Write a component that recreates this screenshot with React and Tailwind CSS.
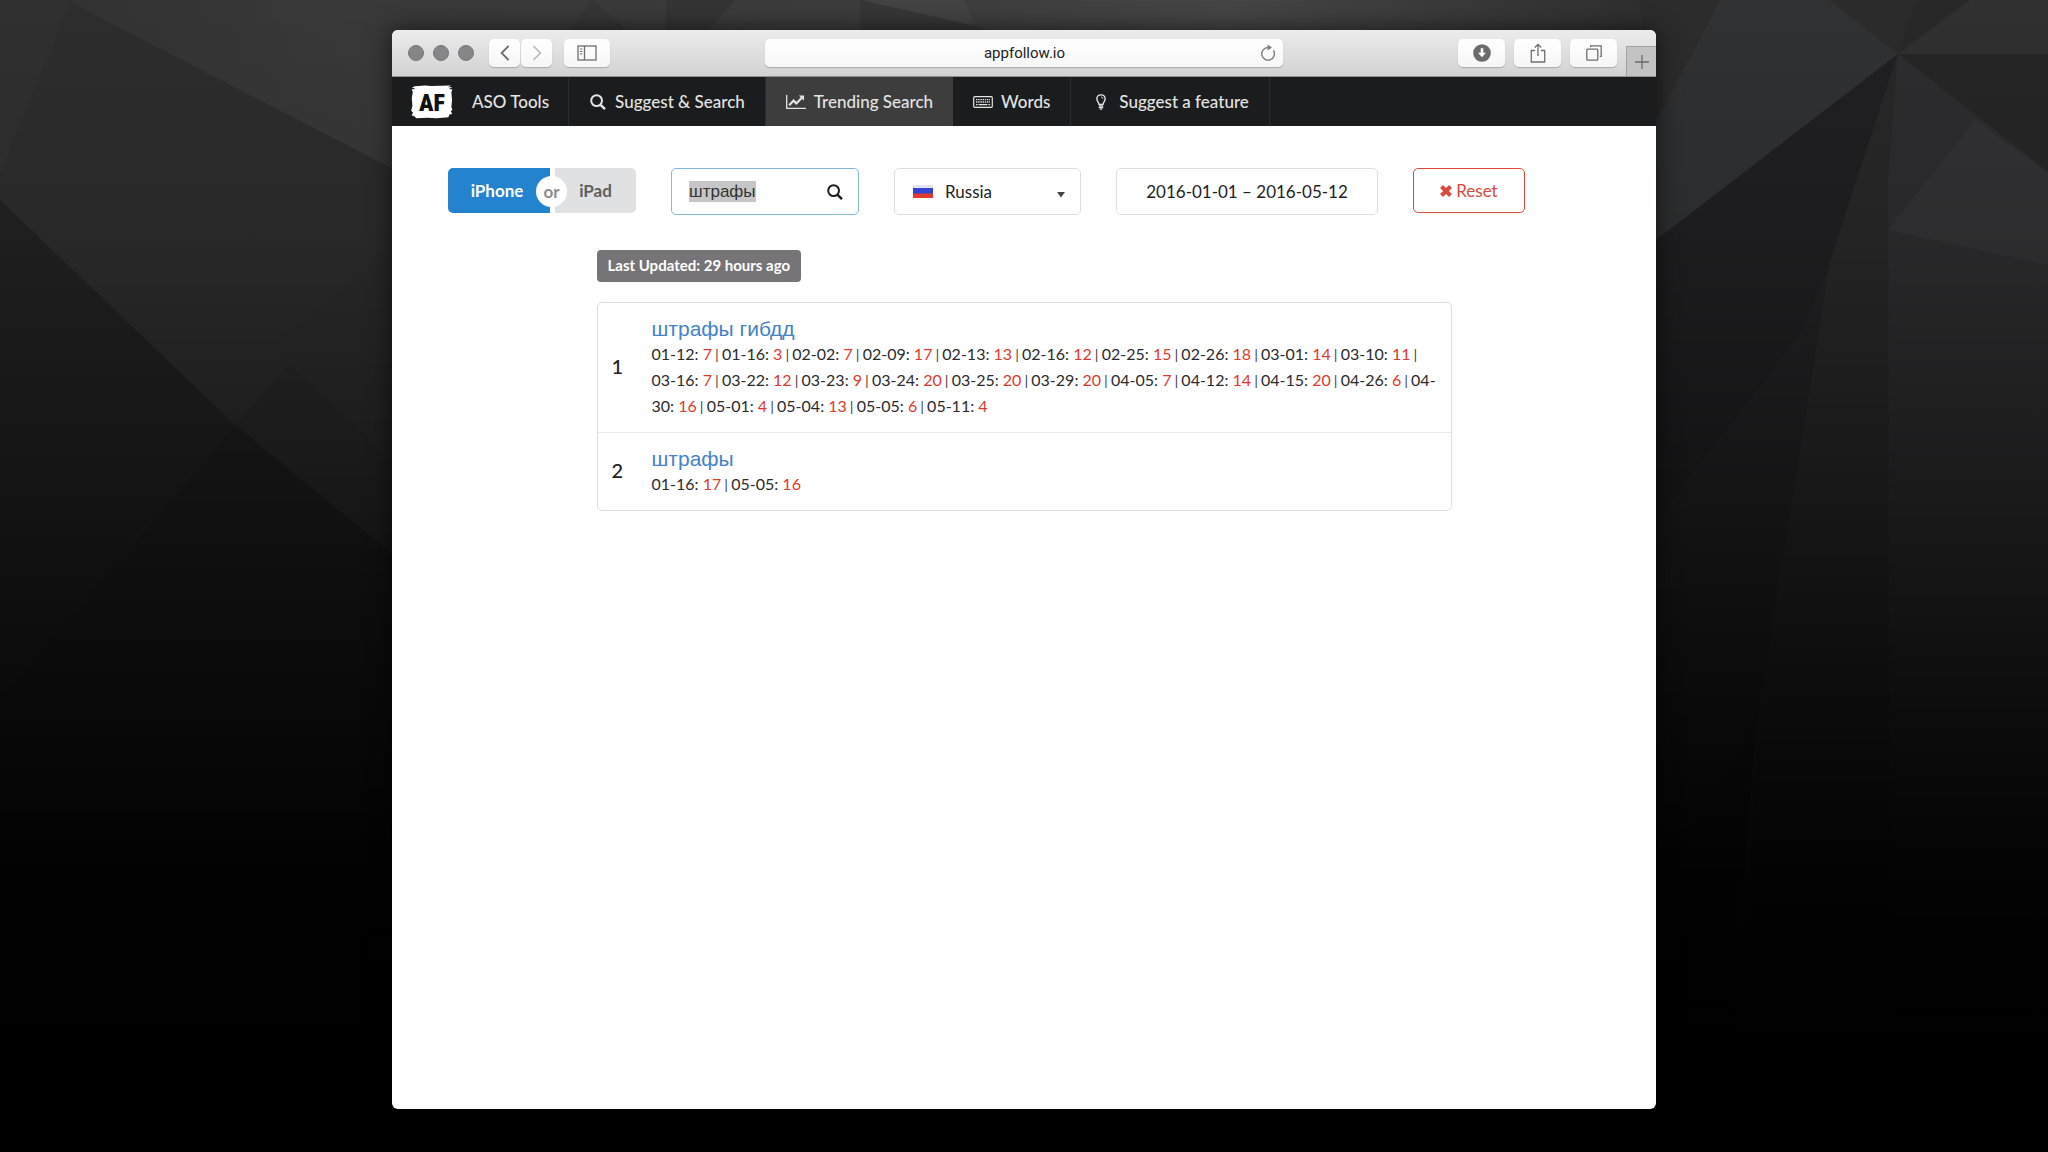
import React from 'react';

const navItems = [
  { label: 'Suggest & Search', icon: 'search', box: 'px-5 border-r' },
  { label: 'Trending Search', icon: 'chart', box: 'px-5 bg-[#3d3d3e]' },
  { label: 'Words', icon: 'keyboard', box: 'px-5 border-r' },
  { label: 'Suggest a feature', icon: 'bulb', box: 'px-5 border-r' },
];

const results = [
  {
    term: 'штрафы гибдд',
    positions: [
      ['01-12', 7], ['01-16', 3], ['02-02', 7], ['02-09', 17], ['02-13', 13], ['02-16', 12],
      ['02-25', 15], ['02-26', 18], ['03-01', 14], ['03-10', 11], ['03-16', 7], ['03-22', 12],
      ['03-23', 9], ['03-24', 20], ['03-25', 20], ['03-29', 20], ['04-05', 7], ['04-12', 14],
      ['04-15', 20], ['04-26', 6], ['04-30', 16], ['05-01', 4], ['05-04', 13], ['05-05', 6],
      ['05-11', 4],
    ],
  },
  { term: 'штрафы', positions: [['01-16', 17], ['05-05', 16]] },
];

const toolButton =
  'flex h-7 items-center justify-center rounded-[5px] bg-gradient-to-b from-white to-[#f6f6f6] shadow-[0_1px_1px_rgba(0,0,0,0.22)] text-[#6e6e6e]';

/* Faceted dark desktop wallpaper */
const Wallpaper = () => (
  <svg
    className="absolute inset-0 h-full w-full"
    viewBox="0 0 2048 1152"
    preserveAspectRatio="none"
    aria-hidden="true"
  >
    <defs>
      <linearGradient id="fade" x1="0" y1="0" x2="0" y2="1">
        <stop offset="0" stopColor="#000" stopOpacity="0" />
        <stop offset="0.2" stopColor="#000" stopOpacity="0.1" />
        <stop offset="0.4" stopColor="#000" stopOpacity="0.38" />
        <stop offset="0.6" stopColor="#000" stopOpacity="0.7" />
        <stop offset="0.75" stopColor="#000" stopOpacity="0.92" />
        <stop offset="0.9" stopColor="#000" stopOpacity="1" />
      </linearGradient>
      <linearGradient id="base" x1="0" y1="0" x2="1" y2="0">
        <stop offset="0" stopColor="#303030" />
        <stop offset="0.15" stopColor="#383838" />
        <stop offset="0.45" stopColor="#3c3c3c" />
        <stop offset="0.6" stopColor="#454545" />
        <stop offset="0.8" stopColor="#2f2f2f" />
        <stop offset="1" stopColor="#303030" />
      </linearGradient>
    </defs>
    <rect width="2048" height="1152" fill="url(#base)" />
    <polygon points="0,0 70,0 0,175" fill="#303030" />
    <polygon points="70,2 395,170 395,245 235,425 0,205 0,175" fill="#2d2d2e" />
    <polygon points="0,200 235,425 50,640 0,700" fill="#222222" />
    <polygon points="395,245 235,425 400,560" fill="#292929" />
    <polygon points="270,345 395,245 395,465" fill="#2c2c2c" />
    <polygon points="235,425 400,560 400,1152 0,1152 0,700 50,640" fill="#1f1f1f" />
    <polygon points="592,0 565,40 640,40" fill="#353535" />
    <polygon points="666,0 735,0 700,40 666,40" fill="#343434" />
    <polygon points="860,0 965,0 975,26" fill="#434343" />
    <polygon points="860,0 975,26 1020,40 860,40" fill="#363636" />
    <polygon points="1640,0 1720,0 1656,122" fill="#2c2c2d" />
    <polygon points="1720,0 1830,0 1898,54 1656,240 1656,122" fill="#303132" />
    <polygon points="1830,0 1898,54 1916,0" fill="#2b2b2b" />
    <polygon points="1916,0 1970,0 1898,54" fill="#282828" />
    <polygon points="1970,0 2048,0 2048,54 1898,54" fill="#303030" />
    <polygon points="1898,54 2048,54 2048,172" fill="#262627" />
    <polygon points="1898,54 1656,240 1656,1152 1720,1152 1757,720 1830,262" fill="#202022" />
    <polygon points="1800,335 1656,520 1656,900 1757,720 1830,262" fill="#232325" />
    <polygon points="1898,54 1830,262 1757,720 1740,1152 1890,1152" fill="#282829" />
    <polygon points="1898,54 2048,172 2048,1152 1890,1152 1888,180" fill="#2d2d2f" />
    <polygon points="1975,120 2048,172 2048,265 1888,230" fill="#323234" />
    <rect width="2048" height="1152" fill="url(#fade)" />
  </svg>
);

const NavIcon = ({ name }) => {
  if (name === 'search') {
    return (
      <svg viewBox="0 0 16 16" className="mx-px h-4 w-4" fill="none" stroke="currentColor" strokeWidth="2">
        <circle cx="6.6" cy="6.6" r="5.4" />
        <path d="M10.6 10.8l4.4 4.4" strokeWidth="2.4" />
      </svg>
    );
  }
  if (name === 'chart') {
    return (
      <svg viewBox="0 0 20 16" className="h-4 w-5" fill="none" stroke="currentColor">
        <path d="M.7 1v13.4H20" strokeWidth="1.3" />
        <path d="M3.2 11.2l4.4-4.6 2.8 2.8 5.4-5.6" strokeWidth="2.2" />
        <path d="M12.8 1.6h5.2v5.2z" fill="currentColor" stroke="none" />
      </svg>
    );
  }
  if (name === 'keyboard') {
    return (
      <svg viewBox="0 0 20 12" className="h-3 w-5" fill="none" stroke="currentColor">
        <rect x=".7" y=".7" width="18.6" height="10.6" rx="1" strokeWidth="1.2" />
        <path d="M3 3.6h14M3 6h14" strokeWidth="1.4" strokeDasharray="1.4 .8" />
        <path d="M3 8.6h1.6M5.6 8.6h8.8M15.4 8.6h1.6" strokeWidth="1.4" />
      </svg>
    );
  }
  return (
    <svg viewBox="0 0 10 16" className="mx-[5px] h-4 w-[10px]" fill="none" stroke="currentColor">
      <path d="M3 10.4C3 8.4.9 7.6.9 4.9.9 2.500 2.700.9 5 .9s4.100 1.600 4.100 4c0 2.700-2.100 3.500-2.100 5.500z" strokeWidth="1.4" />
      <path d="M5 3.100c1.200 0 1.900.7 1.900 1.700" strokeWidth=".9" />
      <path d="M2.800 12h4.400M2.800 13.600h4.400" strokeWidth="1.4" />
      <path d="M3.800 15.100h2.400" strokeWidth="1.2" />
    </svg>
  );
};

/* Brushed plate with the two-letter mark */
const Logo = () => (
  <svg viewBox="0 0 42 34" className="h-[34px] w-[42px]" role="img" aria-label="AF">
    <path
      d="M4 1.200L14 .5 20 .9 40 .4 37 2.200l4.400-.2L38 4l3.400.6-1 2.400.6 8-.6 7 1 3-1.600 1 1.400 3-2.800.6-1 2.600-12 1-9-.4-11 .4L3 31 .600 30.400 2 27.600.2 25.800 1.400 21 .8 13l1-6L.6 4.600l3.800-.8L.8 2.600z"
      fill="#fff"
    />
    <text
      x="21"
      y="26"
      textAnchor="middle"
      fontFamily="'Roboto Condensed', Roboto, sans-serif"
      fontWeight="900"
      fontSize="24"
      fill="#111"
    >
      AF
    </text>
  </svg>
);

const TitleBar = () => (
  <header className="flex h-[47px] items-center border-b border-[#8f8f8f] bg-gradient-to-b from-[#ececec] to-[#d2d2d2]">
    <div className="flex flex-1 items-center">
      <div className="ml-4 flex gap-[9px]">
        {['Close', 'Minimize', 'Zoom'].map((name) => (
          <button
            key={name}
            aria-label={name}
            className="h-4 w-4 rounded-full border border-[#767678] bg-[#868588]"
          />
        ))}
      </div>
      <div className="ml-[15px] flex gap-px">
        <button aria-label="Back" className={`${toolButton} w-[31px]`}>
          <svg viewBox="0 0 10 16" className="h-4 w-[10px]" fill="none" stroke="currentColor" strokeWidth="1.8">
            <path d="M8.600 1L1.600 8l7 7" />
          </svg>
        </button>
        <button aria-label="Forward" className={`${toolButton} w-[31px]`}>
          <svg viewBox="0 0 10 16" className="h-4 w-[10px]" fill="none" stroke="#b4b4b4" strokeWidth="1.5">
            <path d="M1.400 1l7 7-7 7" />
          </svg>
        </button>
      </div>
      <button aria-label="Show sidebar" className={`${toolButton} ml-3 w-[46px]`}>
        <svg viewBox="0 0 20 16" className="h-4 w-5" fill="none" stroke="currentColor" strokeWidth="1.3">
          <rect x="1" y="1" width="18" height="14" />
          <path d="M7.500 1v14" />
          <path d="M3 4h2.400M3 6.500h2.400M3 9h2.400" strokeWidth="1" />
        </svg>
      </button>
    </div>

    <div className="flex h-7 w-[41%] items-center rounded-[5px] bg-gradient-to-b from-white to-[#f7f7f7] pl-6 pr-[7px] shadow-[0_1px_1px_rgba(0,0,0,0.22)]">
      <input
        aria-label="Address"
        defaultValue="appfollow.io"
        className="min-w-0 flex-1 bg-transparent text-center font-['Roboto',sans-serif] text-[15px] text-[#222] outline-none"
      />
      <button aria-label="Reload" className="text-[#7e7e7e]">
        <svg viewBox="0 0 16 18" className="h-[18px] w-4" fill="none" stroke="currentColor" strokeWidth="1.4">
          <path d="M13.400 6.400A6.300 6.300 0 1 1 8 3.500" />
          <path d="M7.600.5l4.400 3-4.400 3z" fill="currentColor" stroke="none" />
        </svg>
      </button>
    </div>

    <div className="flex flex-1 items-center justify-end gap-[9px] self-stretch">
      <button aria-label="Downloads" className={`${toolButton} w-[47px]`}>
        <svg viewBox="0 0 18 18" className="h-[18px] w-[18px]">
          <circle cx="9" cy="9" r="8.800" fill="#6b6b6b" />
          <path d="M7.700 4.200h2.600v4.600h2.700L9 13.200 5 8.800h2.700z" fill="#fff" />
        </svg>
      </button>
      <button aria-label="Share" className={`${toolButton} w-[47px]`}>
        <svg viewBox="0 0 16 20" className="h-5 w-4" fill="none" stroke="currentColor" strokeWidth="1.3">
          <path d="M5 7.500H1.300V19h13.400V7.500H11" />
          <path d="M8 13V1.500M4.800 4.500L8 1.300l3.200 3.200" />
        </svg>
      </button>
      <button aria-label="Show all tabs" className={`${toolButton} w-[47px]`}>
        <svg viewBox="0 0 16 16" className="h-4 w-4" fill="none" stroke="currentColor" strokeWidth="1.300">
          <rect x=".8" y="4.200" width="11" height="11" rx="1" />
          <path d="M4.600 2V.8h10.600v10.600h-1.400" />
        </svg>
      </button>
      <button
        aria-label="New tab"
        className="flex h-[30px] w-[30px] items-center justify-center self-end border-l border-t border-[#a2a2a2] bg-[#c3c3c3] text-[#6a6a6a]"
      >
        <svg viewBox="0 0 14 14" className="h-[14px] w-[14px]" stroke="currentColor" strokeWidth="1.300">
          <path d="M7 0v14M0 7h14" />
        </svg>
      </button>
    </div>
  </header>
);

const NavBar = () => (
  <nav className="flex h-[49px] items-stretch bg-[#1b1c1d] text-[17px] font-medium text-[#e4e4e4]">
    <a href="#aso" className="flex items-center gap-[19px] border-r border-[#2c2c2d] px-[19px]">
      <Logo />
      ASO Tools
    </a>
    {navItems.map((item) => (
      <a key={item.label} href="#nav" className={`flex items-center gap-2 border-[#2c2c2d] ${item.box}`}>
        <NavIcon name={item.icon} />
        {item.label}
      </a>
    ))}
  </nav>
);

const Filters = () => (
  <form className="flex flex-wrap items-start gap-[35px] text-[17px]">
    <div className="relative flex h-[45px] gap-[5px] font-bold">
      <button type="button" className="w-[102px] rounded-l-[5px] bg-[#2383ce] pr-1 text-white">
        iPhone
      </button>
      <button type="button" className="w-[81px] rounded-r-[5px] bg-[#e0e1e2] text-[#5f6061]">
        iPad
      </button>
      <span className="absolute left-[88px] top-2 flex h-[31px] w-[31px] items-center justify-center rounded-full bg-white text-[#8c8c8c]">
        or
      </span>
    </div>

    <div className="flex h-[47px] w-[188px] items-center rounded-[5px] border border-[#85b7d9] pl-[17px] pr-[14px]">
      <input
        aria-label="Search term"
        defaultValue="штрафы"
        className="field-sizing-content min-w-0 bg-[#c6c6c6] font-['Liberation_Sans',sans-serif] text-[17px] leading-[21px] text-[#333] outline-none"
      />
      <button type="button" aria-label="Search" className="ml-auto text-[#1f1f1f]">
        <NavIcon name="search" />
      </button>
    </div>

    <div className="relative flex h-[47px] w-[187px] items-center rounded-[5px] border border-[#dedede] text-[#222]">
      <svg viewBox="0 0 20 13" className="pointer-events-none absolute left-[18px] h-[13px] w-5" aria-hidden="true">
        <rect width="20" height="13" fill="#e4e4ee" />
        <rect y="3" width="20" height="6" fill="#3344d6" />
        <rect y="8.500" width="20" height="4.500" fill="#e33a2c" />
      </svg>
      <select aria-label="Country" className="h-full w-full appearance-none bg-transparent pl-[50px] outline-none">
        <option>Russia</option>
      </select>
      <svg viewBox="0 0 8 6" className="pointer-events-none absolute right-[15px] top-[23px] h-[6px] w-2" aria-hidden="true">
        <path d="M0 0h8L4 5.500z" fill="#444" />
      </svg>
    </div>

    <input
      aria-label="Date range"
      defaultValue="2016-01-01 – 2016-05-12"
      className="h-[47px] w-[262px] rounded-[5px] border border-[#dedede] text-center text-[#222] outline-none"
    />

    <button
      type="reset"
      className="flex h-[45px] w-[112px] items-center justify-center gap-1 rounded-[5px] border border-[#db4a3d] text-[#d9493c]"
    >
      <svg viewBox="0 0 12 12" className="h-3 w-3" stroke="currentColor" strokeWidth="4" aria-hidden="true">
        <path d="M1.500 1.500l9 9M10.500 1.500l-9 9" />
      </svg>
      Reset
    </button>
  </form>
);

const Results = () => (
  <div className="overflow-hidden rounded-[5px] border border-[#dfdde2]">
    <table className="w-full">
      <tbody>
        {results.map((row, i) => (
          <tr key={row.term} className="border-t border-[#ebe9ee] first:border-t-0">
            <td className="w-[42px] pb-1 pl-[14px] text-xl font-medium text-[#222]">{i + 1}</td>
            <td className="py-[13px] pl-3 pr-2">
              <a
                href="#term"
                className="block font-['Liberation_Sans',sans-serif] text-[21px] leading-[25px] text-[#4583c4]"
              >
                {row.term}
              </a>
              <p className="text-base leading-[26px] text-[#2b2b2b]">
                {row.positions.map(([date, pos], n) => (
                  <React.Fragment key={date}>
                    {n > 0 && <span className="text-[13px] leading-none"> | </span>}
                    {date}: <span className="text-[#dc3a30]">{pos}</span>
                  </React.Fragment>
                ))}
              </p>
            </td>
          </tr>
        ))}
      </tbody>
    </table>
  </div>
);

export default function App() {
  return (
    <div className="relative flex min-h-screen justify-center bg-black pb-[43px] pt-[30px] font-['Lato',sans-serif]">
      <Wallpaper />
      <div className="relative flex w-full min-w-0 max-w-[1264px] flex-col overflow-hidden rounded-[6px] bg-white shadow-[0_0_24px_rgba(0,0,0,0.6)]">
        <TitleBar />
        <NavBar />
        <main className="px-14 pt-[42px]">
          <Filters />
          <section className="mx-auto mt-[35px] w-[855px] max-w-full">
            <span className="inline-flex h-8 items-center rounded-[4px] bg-[#767476] px-[11px] pb-0.5 text-[15px] font-bold text-white">
              Last Updated: 29 hours ago
            </span>
            <div className="mt-5">
              <Results />
            </div>
          </section>
        </main>
      </div>
    </div>
  );
}
